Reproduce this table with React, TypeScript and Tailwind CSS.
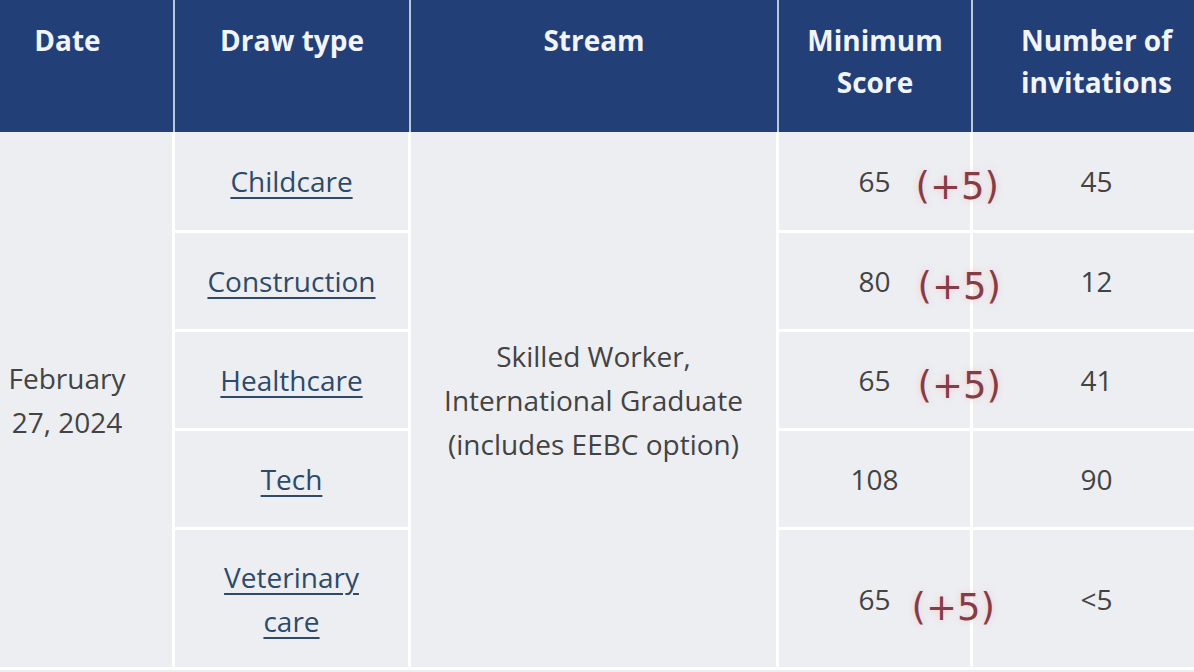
type DrawRow = {
  type: string[];
  score: string;
  bonus: string;
  invitations: string;
  height: string;
};

const rows: DrawRow[] = [
  { type: ["Childcare"], score: "65", bonus: "left-[calc(100%+25px)] top-[calc(50%+5px)]", invitations: "45", height: "h-[101px]" },
  { type: ["Construction"], score: "80", bonus: "left-[calc(100%+27px)] top-[calc(50%+5px)]", invitations: "12", height: "h-[99px]" },
  { type: ["Healthcare"], score: "65", bonus: "left-[calc(100%+27px)] top-[calc(50%+5px)]", invitations: "41", height: "h-[99px]" },
  { type: ["Tech"], score: "108", bonus: "", invitations: "90", height: "h-[99px]" },
  { type: ["Veterinary", "care"], score: "65", bonus: "left-[calc(100%+21px)] top-[calc(50%+8px)]", invitations: "<5", height: "h-[140px]" },
];

export default function App() {
  return (
    <div className="h-[672px] w-[1194px] overflow-hidden bg-[#eceef2] font-['Open_Sans','Noto_Sans',sans-serif]">
      <table className="w-[1194px] table-fixed border-separate border-spacing-0 text-[28px] leading-[44px] text-[#434343]">
        <colgroup>
          <col className="w-[175px]" />
          <col className="w-[236px]" />
          <col className="w-[368px]" />
          <col className="w-[194px]" />
          <col className="w-[221px]" />
        </colgroup>
        <thead className="bg-[#233f78] text-[#f1f4f9]">
          <tr>
            <th className="h-[132px] border-r-2 border-[#b9c8da] pr-[38px] pt-[19px] align-top font-bold leading-[42px]">Date</th>
            <th className="h-[132px] border-r-2 border-[#b9c8da] pt-[19px] align-top font-bold leading-[42px]">Draw type</th>
            <th className="h-[132px] border-r-2 border-[#b9c8da] pt-[19px] align-top font-bold leading-[42px]">Stream</th>
            <th className="h-[132px] border-r-2 border-[#b9c8da] pt-[19px] align-top font-bold leading-[42px]">
              Minimum
              <br />
              Score
            </th>
            <th className="h-[132px] pl-[26px] pt-[19px] align-top font-bold leading-[42px]">
              Number of
              <br />
              invitations
            </th>
          </tr>
        </thead>
        <tbody>
          {rows.map((row, i) => (
            <tr key={row.type.join(" ")}>
              {i === 0 && (
                <td rowSpan={5} className="border-r-[3px] border-b-[3px] border-white pr-[38px] text-center align-middle">
                  February
                  <br />
                  27, 2024
                </td>
              )}
              <td className={`${row.height} border-r-[3px] border-b-[3px] border-white text-center align-middle`}>
                {row.type.map((word, j) => (
                  <span key={word}>
                    {j > 0 && <br />}
                    <a href="#" className="text-[#2e4a69] underline decoration-2 underline-offset-[5px]">
                      {word}
                    </a>
                  </span>
                ))}
              </td>
              {i === 0 && (
                <td rowSpan={5} className="border-r-[3px] border-b-[3px] border-white text-center align-middle">
                  Skilled Worker,
                  <br />
                  International Graduate
                  <br />
                  (includes EEBC option)
                </td>
              )}
              <td className="border-r-[3px] border-b-[3px] border-white text-center align-middle">
                <span className="relative inline-block">
                  {row.score}
                  {row.bonus && (
                    <span
                      className={`absolute ${row.bonus} -translate-y-1/2 whitespace-nowrap font-['DejaVu_Sans',sans-serif] text-[37px] leading-none text-[#843d45] [text-shadow:0_0_6px_rgba(255,170,170,0.6)]`}
                    >
                      (+5)
                    </span>
                  )}
                </span>
              </td>
              <td className="border-b-[3px] border-white pl-[26px] text-center align-middle">{row.invitations}</td>
            </tr>
          ))}
        </tbody>
      </table>
    </div>
  );
}
